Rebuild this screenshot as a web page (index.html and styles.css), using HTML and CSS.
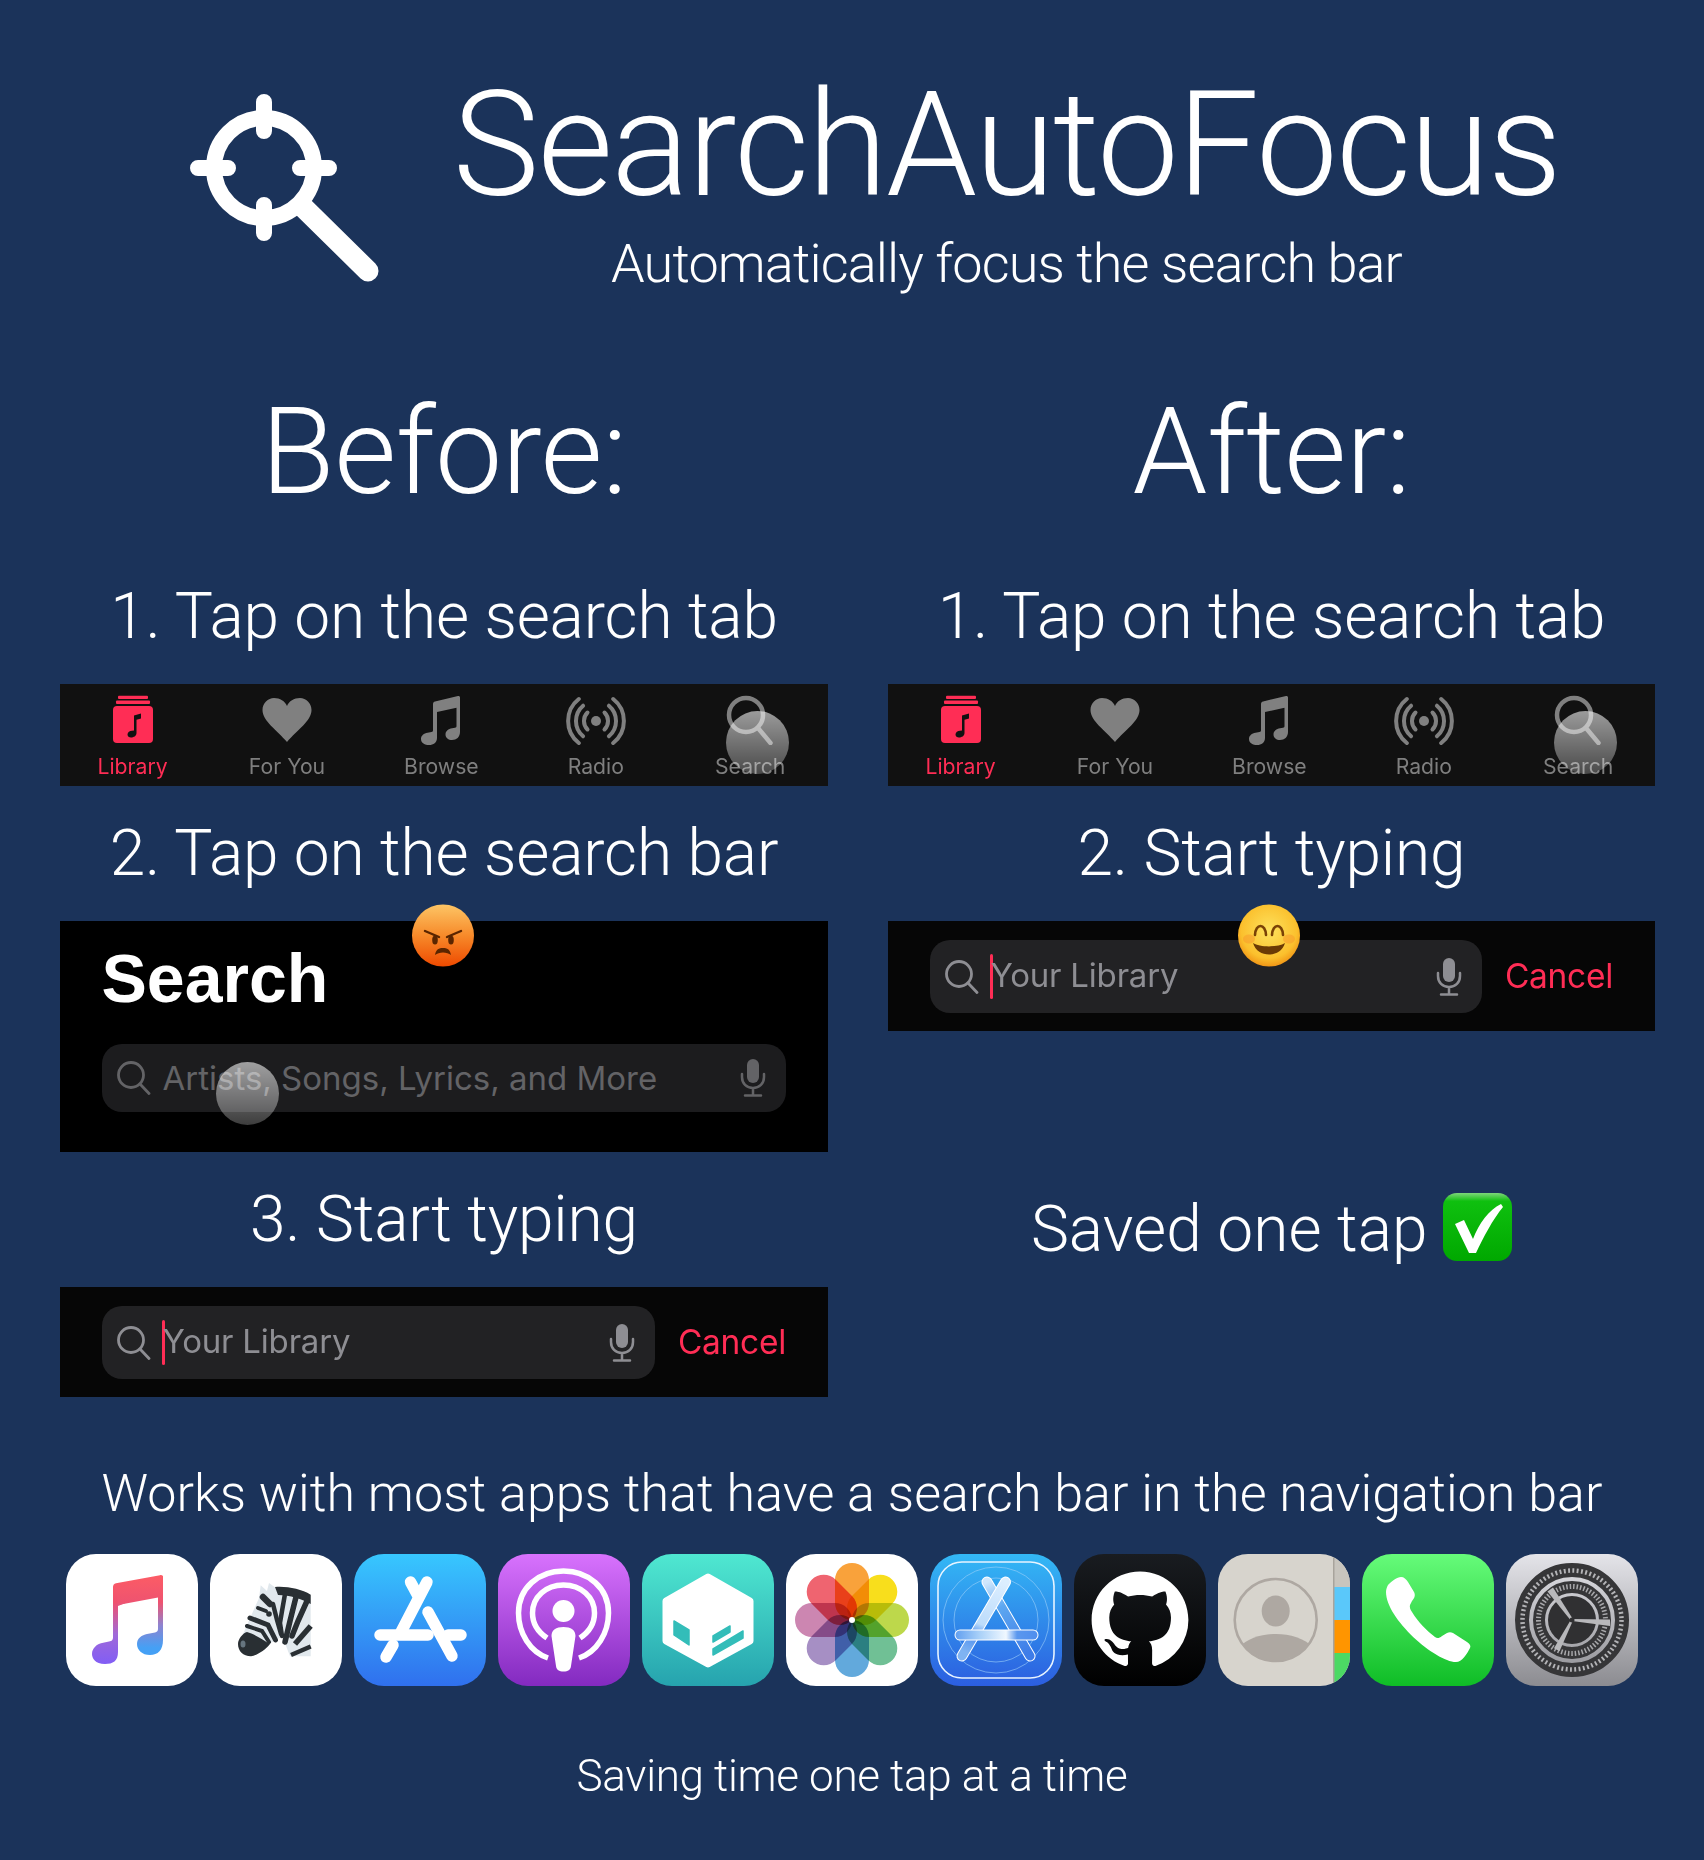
FILE: index.html
```html
<!DOCTYPE html>
<html lang="en">
<head>
<meta charset="utf-8">
<title>SearchAutoFocus</title>
<link rel="stylesheet" href="styles.css">
</head>
<body>
<svg class="defs" aria-hidden="true">
  <symbol id="i-library" viewBox="0 0 60 50">
    <rect x="15" y="0.7" width="30" height="3.3" rx="1" fill="#ff2d55"/>
    <rect x="13" y="5.5" width="34" height="3.5" rx="1" fill="#ff2d55"/>
    <rect x="10" y="11" width="40" height="37" rx="4" fill="#ff2d55"/>
    <path d="M31 20.500L38 18.500V23.500L33.500 24.800V38C33.500 41 30.500 42.500 28 42.500C26 42.500 24.500 41.300 24.500 39.500C24.500 37.300 26.800 36 29 35.800L31 35.500Z" fill="#111"/>
  </symbol>
  <symbol id="i-heart" viewBox="0 0 60 50">
    <path d="M30 47C20 35 5.500 26 5.500 15C5.500 8 11 3 17 3C23 3 28 6 30 11C32 6 37 3 43 3C49 3 54.500 8 54.500 15C54.500 26 40 35 30 47Z" fill="#808080"/>
  </symbol>
  <symbol id="i-note" viewBox="0 0 60 50">
    <path fill-rule="evenodd" d="M22 9C22 7.500 23 6.700 24 6.500L47 1C48.200 0.800 49 1.500 49 2.500V37C49 42 45.500 45 41 45C37.500 45 34.500 43 34.500 39.500C34.500 36 37.500 34 41 33.300L44 32.700C45 32.500 45.500 32 45.500 31V12.800L26 17V43C26 47.500 22.500 50 18 50C14 50 10 48 10 44C10 40.500 13 38.500 16.500 37.800L20.500 37C21.500 36.800 22 36.300 22 35.300Z" fill="#808080"/>
  </symbol>
  <symbol id="i-radio" viewBox="0 0 60 50">
    <circle cx="30" cy="26" r="5" fill="#808080"/>
    <g fill="none" stroke="#808080" stroke-width="4" stroke-linecap="round">
      <path d="M21.500 17.500A12 12 0 0 0 21.500 34.500M38.500 17.500A12 12 0 0 1 38.500 34.500"/>
      <path d="M17.100 10.700A20 20 0 0 0 17.100 41.300M42.900 10.700A20 20 0 0 1 42.900 41.300"/>
      <path d="M12.800 4A28 28 0 0 0 12.800 48M47.200 4A28 28 0 0 1 47.200 48"/>
    </g>
  </symbol>
  <symbol id="i-search-tab" viewBox="0 0 60 50">
    <g fill="none" stroke="#808080" stroke-width="4.500" stroke-linecap="round">
      <circle cx="26" cy="20" r="17"/>
      <path d="M38 33L50.500 48"/>
    </g>
  </symbol>
  <symbol id="i-glass" viewBox="0 0 34 34">
    <g fill="none" stroke="currentColor" stroke-width="2.800" stroke-linecap="round">
      <circle cx="14" cy="14" r="12.500"/>
      <path d="M23.500 23.500L32 32.500"/>
    </g>
  </symbol>
  <symbol id="i-mic" viewBox="0 0 26 38">
    <rect x="7" y="0" width="12" height="24" rx="6" fill="currentColor"/>
    <path d="M2 15V18C2 24.500 6.500 29 13 29C19.500 29 24 24.500 24 18V15M13 29V36M5 36.500H21" fill="none" stroke="currentColor" stroke-width="2.500" stroke-linecap="round"/>
  </symbol>
  <symbol id="i-touch" viewBox="0 0 63 63">
    <circle cx="31.500" cy="31.500" r="31.500" fill="url(#touchfill)"/>
  </symbol>
  <linearGradient id="touchfill" x1="0" y1="0" x2="0" y2="1">
    <stop offset="0" stop-color="#fff" stop-opacity="0.58"/>
    <stop offset="1" stop-color="#fff" stop-opacity="0.24"/>
  </linearGradient>
</svg>

<header class="hero">
  <svg class="logo" viewBox="0 0 192 192" width="192" height="192" aria-hidden="true">
    <g fill="none" stroke="#fff" stroke-linecap="round">
      <circle cx="74" cy="76" r="50" stroke-width="16"/>
      <path d="M74 10V39M74 113V141M8 76H38M110 76H139" stroke-width="16"/>
      <path d="M114 116L178 179" stroke-width="21"/>
    </g>
  </svg>
  <div class="hero-text">
    <h1 class="title">SearchAutoFocus</h1>
    <p class="subtitle">Automatically focus the search bar</p>
  </div>
</header>

<main class="compare">
  <section class="col">
    <h2 class="col-title">Before:</h2>
    <h3 class="step step-first">1. Tap on the search tab</h3>
    <div class="panel tabbar">
      <div class="tabs">
        <div class="tab tab-on"><svg class="tab-icon"><use href="#i-library"/></svg><span class="tab-label">Library</span></div>
        <div class="tab"><svg class="tab-icon"><use href="#i-heart"/></svg><span class="tab-label">For You</span></div>
        <div class="tab"><svg class="tab-icon"><use href="#i-note"/></svg><span class="tab-label">Browse</span></div>
        <div class="tab"><svg class="tab-icon"><use href="#i-radio"/></svg><span class="tab-label">Radio</span></div>
        <div class="tab"><svg class="tab-icon"><use href="#i-search-tab"/></svg><span class="tab-label">Search</span></div>
      </div>
      <svg class="touch touch-tab"><use href="#i-touch"/></svg>
    </div>
    <h3 class="step">2. Tap on the search bar</h3>
    <div class="panel searchpage">
      <div class="big-search">Search</div>
      <div class="field field-idle">
        <svg class="glass"><use href="#i-glass"/></svg>
        <span class="field-text">Artists, Songs, Lyrics, and More</span>
        <svg class="mic"><use href="#i-mic"/></svg>
      </div>
      <svg class="touch touch-field"><use href="#i-touch"/></svg>
      <svg class="emoji" viewBox="0 0 62 63" aria-hidden="true">
        <defs><linearGradient id="angry" x1="0" y1="0" x2="0" y2="1"><stop offset="0" stop-color="#fdc565"/><stop offset="0.5" stop-color="#f78a2a"/><stop offset="1" stop-color="#ee4a00"/></linearGradient></defs>
        <circle cx="31" cy="31.500" r="31" fill="url(#angry)"/>
        <g fill="none" stroke="#5a2500" stroke-width="2.400" stroke-linecap="round">
          <path d="M13 27L27 33M49 27L35 33"/>
        </g>
        <path d="M23 51C24 45 27 44 31 44C35 44 38 45 39 51C35 47.500 27 47.500 23 51Z" fill="#5a2500"/>
        <ellipse cx="23" cy="36" rx="2.800" ry="4.500" fill="#5a2500"/>
        <ellipse cx="39" cy="36" rx="2.800" ry="4.500" fill="#5a2500"/>
      </svg>
    </div>
    <h3 class="step">3. Start typing</h3>
    <div class="panel typing">
      <div class="field field-active">
        <svg class="glass"><use href="#i-glass"/></svg>
        <span class="caret"></span>
        <span class="field-text">Your Library</span>
        <svg class="mic"><use href="#i-mic"/></svg>
      </div>
      <span class="cancel">Cancel</span>
    </div>
  </section>

  <section class="col">
    <h2 class="col-title">After:</h2>
    <h3 class="step step-first">1. Tap on the search tab</h3>
    <div class="panel tabbar">
      <div class="tabs">
        <div class="tab tab-on"><svg class="tab-icon"><use href="#i-library"/></svg><span class="tab-label">Library</span></div>
        <div class="tab"><svg class="tab-icon"><use href="#i-heart"/></svg><span class="tab-label">For You</span></div>
        <div class="tab"><svg class="tab-icon"><use href="#i-note"/></svg><span class="tab-label">Browse</span></div>
        <div class="tab"><svg class="tab-icon"><use href="#i-radio"/></svg><span class="tab-label">Radio</span></div>
        <div class="tab"><svg class="tab-icon"><use href="#i-search-tab"/></svg><span class="tab-label">Search</span></div>
      </div>
      <svg class="touch touch-tab"><use href="#i-touch"/></svg>
    </div>
    <h3 class="step">2. Start typing</h3>
    <div class="panel typing">
      <div class="field field-active">
        <svg class="glass"><use href="#i-glass"/></svg>
        <span class="caret"></span>
        <span class="field-text">Your Library</span>
        <svg class="mic"><use href="#i-mic"/></svg>
      </div>
      <span class="cancel">Cancel</span>
      <svg class="emoji" viewBox="0 0 62 63" aria-hidden="true">
        <defs><radialGradient id="smile" cx="0.5" cy="0.42" r="0.62"><stop offset="0" stop-color="#fde25e"/><stop offset="0.72" stop-color="#fbc02d"/><stop offset="1" stop-color="#ee8a10"/></radialGradient></defs>
        <circle cx="31" cy="31.500" r="31" fill="url(#smile)"/>
        <ellipse cx="11" cy="35" rx="6" ry="4.500" fill="#f79a2c" opacity="0.55"/>
        <ellipse cx="51" cy="35" rx="6" ry="4.500" fill="#f79a2c" opacity="0.55"/>
        <g fill="none" stroke="#7a4206" stroke-width="2.600" stroke-linecap="round">
          <path d="M17 31C17.500 19 27.500 19 28 31M34 31C34.500 19 44.500 19 45 31"/>
        </g>
        <path d="M15 39C22 43.500 40 43.500 47 39C44.500 47 38 50.500 31 50.500C24 50.500 17.500 47 15 39Z" fill="#6b3a05"/>
      </svg>
    </div>
    <p class="saved">Saved one tap <svg class="check" viewBox="0 0 69 68" aria-hidden="true">
      <defs><linearGradient id="checkbg" x1="0" y1="0" x2="0" y2="1"><stop offset="0" stop-color="#7ed67a"/><stop offset="0.12" stop-color="#0fc00f"/><stop offset="1" stop-color="#00a800"/></linearGradient></defs>
      <rect width="69" height="68" rx="14" fill="url(#checkbg)"/>
      <path d="M12 31L21 27L30 46C36 30 46 17 58 11L60 14C50 26 40 45 33 60H26Z" fill="#fff"/>
    </svg></p>
  </section>
</main>

<footer class="apps">
  <p class="works">Works with most apps that have a search bar in the navigation bar</p>
  <div class="app-row">
    <svg class="app" viewBox="0 0 132 132" aria-hidden="true">
      <defs><linearGradient id="m1" gradientUnits="userSpaceOnUse" x1="0" y1="21" x2="0" y2="112"><stop offset="0" stop-color="#fc5c65"/><stop offset="0.3" stop-color="#f0506e"/><stop offset="0.65" stop-color="#a06ad8"/><stop offset="1" stop-color="#7f5cf7"/></linearGradient>
      <linearGradient id="m2" gradientUnits="userSpaceOnUse" x1="0" y1="21" x2="0" y2="112"><stop offset="0" stop-color="#fc5c65"/><stop offset="0.3" stop-color="#ee5370"/><stop offset="0.55" stop-color="#8f83cf"/><stop offset="0.8" stop-color="#45a0f5"/></linearGradient></defs>
      <rect width="132" height="132" fill="#fff"/>
      <path d="M47 33C47 31 48 30 50 29.300L94 21.200C96 20.800 97 21.600 97 23.500V34L52 52V98C52 107 47 110 39 110C29 110 26 104 26 100C26 94 31 90 36 89L43 87.500C46 87 47 86 47 83Z" fill="url(#m1)"/>
      <path d="M97 22V86C97 96 92 101 84 101C76 101 71 96 71 90C71 84 76 81 81 80L89 78.500C91 78 92 77 92 75V43.500L52 51L50 35Z" fill="url(#m2)"/>
    </svg>
    <svg class="app" viewBox="0 0 132 132" aria-hidden="true">
      <rect width="132" height="132" fill="#fff"/>
      <path d="M50.700 31.300L57 37L59 29L66 34C78 33 92 35 100.700 41V102.300H80L72.300 82.300L60.700 89L41 102.300L28.300 90.700L35.700 74L49 44Z" fill="#e1e8ed"/>
      <path d="M65 33C77 32 91 35 100.700 40.700V50C92 45 80 41 68 41Z" fill="#292f33"/>
      <g fill="none" stroke="#292f33" stroke-linecap="round">
        <path d="M75 40L72 57L70 69L72 82" stroke-width="4.500"/>
        <path d="M86 43L80 67L75 88" stroke-width="5.500"/>
        <path d="M97 47L88 67L82 82" stroke-width="5.500"/>
        <path d="M100.700 72L85 90" stroke-width="5.500" stroke-linecap="butt"/>
        <path d="M100.700 92.500L81 101" stroke-width="4.500" stroke-linecap="butt"/>
        <path d="M53 43L60 50" stroke-width="6.500"/>
        <path d="M48 54L56 57" stroke-width="4"/>
        <path d="M63 50L67 66L71 80" stroke-width="4.500"/>
        <path d="M40 64L58 71L65.500 86" stroke-width="5"/>
        <path d="M37 72L52 77L59 88" stroke-width="4"/>
      </g>
      <circle cx="59" cy="60" r="2.800" fill="#292f33"/>
      <path d="M37 78C45 80 55 87 60 90C55 96 48 101 41 102.300C33 102.300 28 97 28 90C28 85 33 79 37 78Z" fill="#292f33"/>
      <ellipse cx="33" cy="90" rx="2.500" ry="3.500" fill="#66757f"/>
    </svg>
    <svg class="app" viewBox="0 0 132 132" aria-hidden="true">
      <defs><linearGradient id="as" x1="0" y1="0" x2="0" y2="1"><stop offset="0" stop-color="#37c7fe"/><stop offset="1" stop-color="#3070ee"/></linearGradient></defs>
      <rect width="132" height="132" fill="url(#as)"/>
      <g fill="none" stroke="#fff" stroke-width="11.500" stroke-linecap="round">
        <path d="M73 28L46 80"/>
        <path d="M56.500 28L63 40"/>
        <path d="M74 58L98 102"/>
        <path d="M26 81H74M94 81H107"/>
        <path d="M39 91L32 103"/>
      </g>
    </svg>
    <svg class="app" viewBox="0 0 132 132" aria-hidden="true">
      <defs><linearGradient id="pc" x1="0" y1="0" x2="0" y2="1"><stop offset="0" stop-color="#d872fd"/><stop offset="1" stop-color="#832ac0"/></linearGradient></defs>
      <rect width="132" height="132" fill="url(#pc)"/>
      <g fill="none" stroke="#fff" stroke-width="5.500">
        <path d="M50 104C32 98 20.500 79 20.500 59C20.500 34 40.500 17 65.500 17C90.500 17 110.500 34 110.500 59C110.500 79 99 98 81 104"/>
        <path d="M49 84C40 78 34.500 69 34.500 59C34.500 43 48 31 65.500 31C83 31 96.500 43 96.500 59C96.500 69 91 78 82 84"/>
      </g>
      <circle cx="65.500" cy="57" r="11" fill="#fff"/>
      <path d="M53.500 82C53.500 76 58 73 65.500 73C73 73 77.500 76 77.500 82L73 112C72.500 116 70 117.500 65.500 117.500C61 117.500 58.500 116 58 112Z" fill="#fff"/>
    </svg>
    <svg class="app" viewBox="0 0 132 132" aria-hidden="true">
      <defs><linearGradient id="sl" x1="0" y1="0" x2="0" y2="1"><stop offset="0" stop-color="#4fe8d1"/><stop offset="1" stop-color="#26a3ae"/></linearGradient></defs>
      <rect width="132" height="132" fill="url(#sl)"/>
      <path d="M66 23L108 47V87L66 110L24 87V47Z" fill="#fff" stroke="#fff" stroke-width="7" stroke-linejoin="round"/>
      <g fill="#33bdb9" stroke="#33bdb9" stroke-width="1.500" stroke-linejoin="round">
        <path d="M32 67L47 76V91L32 81Z"/>
        <path d="M71 82L88 72V78L71 88Z"/>
        <path d="M71 95L101 77V84L71 101Z"/>
      </g>
    </svg>
    <svg class="app" viewBox="0 0 132 132" aria-hidden="true">
      <rect width="132" height="132" fill="#fff"/>
      <g class="petals">
        <rect class="petal" x="49" y="9" width="34" height="57" rx="17" fill="#f9a23b"/>
        <rect class="petal" x="49" y="9" width="34" height="57" rx="17" fill="#f8de1c" transform="rotate(45 66 66)"/>
        <rect class="petal" x="49" y="9" width="34" height="57" rx="17" fill="#bdd84b" transform="rotate(90 66 66)"/>
        <rect class="petal" x="49" y="9" width="34" height="57" rx="17" fill="#70c095" transform="rotate(135 66 66)"/>
        <rect class="petal" x="49" y="9" width="34" height="57" rx="17" fill="#62a9dc" transform="rotate(180 66 66)"/>
        <rect class="petal" x="49" y="9" width="34" height="57" rx="17" fill="#a68fc4" transform="rotate(225 66 66)"/>
        <rect class="petal" x="49" y="9" width="34" height="57" rx="17" fill="#cc86b1" transform="rotate(270 66 66)"/>
        <rect class="petal" x="49" y="9" width="34" height="57" rx="17" fill="#ef6470" transform="rotate(315 66 66)"/>
      </g>
      <circle cx="66" cy="66" r="3" fill="#fff"/>
    </svg>
    <svg class="app" viewBox="0 0 132 132" aria-hidden="true">
      <defs><linearGradient id="xc" x1="0" y1="0" x2="0" y2="1"><stop offset="0" stop-color="#33b8f5"/><stop offset="1" stop-color="#2c5ee0"/></linearGradient>
      <linearGradient id="xl" gradientUnits="userSpaceOnUse" x1="70" y1="27" x2="40" y2="100"><stop offset="0" stop-color="#dceeff"/><stop offset="0.6" stop-color="#bcdcfb"/><stop offset="0.75" stop-color="#4f8fee"/><stop offset="1" stop-color="#7fb3f2"/></linearGradient>
      <linearGradient id="xr" gradientUnits="userSpaceOnUse" x1="60" y1="27" x2="95" y2="100"><stop offset="0" stop-color="#cfe7fd"/><stop offset="0.35" stop-color="#5da7f0"/><stop offset="1" stop-color="#3f7de8"/></linearGradient>
      <linearGradient id="xh" gradientUnits="userSpaceOnUse" x1="24" y1="0" x2="108" y2="0"><stop offset="0" stop-color="#5d9cef"/><stop offset="0.3" stop-color="#a8d0f8"/><stop offset="0.62" stop-color="#f0f8ff"/><stop offset="0.75" stop-color="#5a97ee"/><stop offset="1" stop-color="#4f8eee"/></linearGradient></defs>
      <rect width="132" height="132" fill="url(#xc)"/>
      <rect x="8" y="8" width="116" height="116" rx="24" fill="none" stroke="#e8f4ff" stroke-width="1.600"/>
      <circle cx="66" cy="66" r="53" fill="none" stroke="#9fd2fa" stroke-width="0.600"/>
      <circle cx="66" cy="66" r="42" fill="none" stroke="#9fd2fa" stroke-width="0.600"/>
      <g stroke-linecap="round" fill="none">
        <path d="M57 28L100 102" stroke="#fff" stroke-width="11"/>
        <path d="M57 28L100 102" stroke="url(#xr)" stroke-width="9"/>
        <path d="M75.500 28L32 102" stroke="#fff" stroke-width="11"/>
        <path d="M75.500 28L32 102" stroke="url(#xl)" stroke-width="9"/>
        <path d="M30 81H103" stroke="#fff" stroke-width="11"/>
        <path d="M30 81H103" stroke="url(#xh)" stroke-width="9"/>
      </g>
    </svg>
    <svg class="app" viewBox="0 0 132 132" aria-hidden="true">
      <defs><linearGradient id="gh" x1="0" y1="0" x2="0" y2="1"><stop offset="0" stop-color="#191c20"/><stop offset="1" stop-color="#000"/></linearGradient></defs>
      <rect width="132" height="132" fill="url(#gh)"/>
      <path transform="translate(17.600 17.600) scale(6.050)" fill="#fff" d="M8 0C3.580 0 0 3.580 0 8c0 3.540 2.290 6.530 5.470 7.590.4.070.55-.17.55-.38 0-.19-.01-.82-.01-1.490-2.010.37-2.530-.49-2.690-.94-.09-.23-.48-.94-.82-1.130-.28-.15-.68-.52-.01-.53.63-.01 1.080.58 1.230.82.72 1.210 1.870.87 2.330.66.07-.52.28-.87.51-1.070-1.780-.2-3.640-.89-3.640-3.950 0-.87.31-1.590.82-2.150-.08-.2-.36-1.020.08-2.120 0 0 .67-.21 2.200.82.64-.18 1.320-.27 2-.27.68 0 1.360.09 2 .27 1.530-1.040 2.200-.82 2.200-.82.44 1.100.16 1.920.08 2.120.51.56.82 1.270.82 2.150 0 3.070-1.870 3.750-3.650 3.950.29.25.54.73.54 1.480 0 1.070-.01 1.930-.01 2.200 0 .21.15.46.55.38A8.013 8.013 0 0016 8c0-4.420-3.580-8-8-8z"/>
    </svg>
    <svg class="app" viewBox="0 0 132 132" aria-hidden="true">
      <defs><clipPath id="ct"><circle cx="57.700" cy="66" r="40.400"/></clipPath></defs>
      <rect width="132" height="132" fill="#d7d4cd"/>
      <rect x="115" y="0" width="17" height="33" fill="#c8c5be"/>
      <rect x="115" y="33" width="17" height="33" fill="#5ac8fa"/>
      <rect x="115" y="66" width="17" height="33" fill="#ff9500"/>
      <rect x="115" y="99" width="17" height="33" fill="#4cd964"/>
      <rect x="115" y="0" width="1.500" height="132" fill="#a8a49c"/>
      <circle cx="57.700" cy="66" r="41" fill="none" stroke="#aea8a2" stroke-width="2.600"/>
      <ellipse cx="57.700" cy="57" rx="14" ry="15.500" fill="#aea8a2"/>
      <path d="M20 94C30 84 44 80 58 80C72 80 86 84 96 94V112H20Z" fill="#aea8a2" clip-path="url(#ct)"/>
    </svg>
    <svg class="app" viewBox="0 0 132 132" aria-hidden="true">
      <defs><linearGradient id="ph" x1="0" y1="0" x2="0" y2="1"><stop offset="0" stop-color="#66fb7a"/><stop offset="1" stop-color="#0fbd26"/></linearGradient></defs>
      <rect width="132" height="132" fill="url(#ph)"/>
      <path d="M26 31C30 27 35 23 39 23C42 23 44 25 46 28L52 38C53.500 41 53 43.500 50 47L48 51C47.500 53 48 55 50 58C56 68 65 77 73 83C75 84.500 77 84.500 80 82L85 79C87 78 89 78 91 79L105 88C108 90 109 92 108 94C105 100 100 108 94 108C74 108 24 65 24 38C24 35 25 33 26 31Z" fill="#fff"/>
    </svg>
    <svg class="app" viewBox="0 0 132 132" aria-hidden="true">
      <defs><linearGradient id="st" x1="0" y1="0" x2="0" y2="1"><stop offset="0" stop-color="#e4e4e9"/><stop offset="1" stop-color="#8c8c91"/></linearGradient></defs>
      <rect width="132" height="132" fill="url(#st)"/>
      <g fill="none">
        <circle cx="66" cy="66" r="50" stroke="#363638" stroke-width="14"/>
        <circle cx="66" cy="66" r="49.500" stroke="#b4b4b7" stroke-width="4.500" stroke-dasharray="1.900 2.420"/>
        <circle cx="66" cy="66" r="33" stroke="#363638" stroke-width="12"/>
        <circle cx="66" cy="66" r="33.500" stroke="#a8a8ab" stroke-width="5" stroke-dasharray="1.500 1.950"/>
      </g>
      <circle cx="66" cy="66" r="24" fill="#303032"/>
      <g fill="#b8b8bb">
        <path d="M66 65L104 65.500V72L66 67Z"/>
        <path d="M67 65.200L47 33.500L41.500 37.500L65 66.800Z"/>
        <path d="M67 66.500L53.500 97.200L48 94.200L65 65.500Z"/>
      </g>
      <circle cx="66" cy="66" r="2.500" fill="#303032"/>
    </svg>
  </div>
  <p class="tagline">Saving time one tap at a time</p>
</footer>
</body>
</html>
```
FILE: styles.css
```css
* { box-sizing: border-box; }
html, body { margin: 0; padding: 0; }
body {
  width: 1704px;
  height: 1860px;
  overflow: hidden;
  background: #1b335a;
  color: #fff;
  font-family: Roboto, "Liberation Sans", sans-serif;
  font-weight: 300;
}
h1, h2, h3, p { margin: 0; font-weight: 300; }
.defs { position: absolute; width: 0; height: 0; }

.hero {
  display: flex;
  height: 380px;
  padding: 92px 0 0 190px;
}
.logo { flex: none; }
.hero-text {
  width: 1101px;
  margin-left: 74px;
  margin-top: -26px;
  display: flex;
  flex-direction: column;
  align-items: center;
}
.title { font-size: 146px; line-height: 160px; white-space: nowrap; letter-spacing: -1.74px; }
.subtitle { font-size: 54px; line-height: 70px; margin-top: 3px; white-space: nowrap; letter-spacing: -0.87px; }

.compare {
  display: grid;
  grid-template-columns: 768px 767px;
  column-gap: 60px;
  padding-left: 60px;
  height: 1017px;
}
.col { display: flex; flex-direction: column; align-items: center; }
.col-title { font-size: 120px; line-height: 142px; letter-spacing: -0.5px; position: relative; top: 1px; }
.step { font-size: 64px; line-height: 80px; margin: 28px 0 27px; letter-spacing: -0.15px; }
.step-first { margin-top: 55px; }

.panel { position: relative; width: 100%; }
.tabbar { height: 102px; background: #111; }
.searchpage { height: 231px; background: #000; padding: 23px 42px 0 41.500px; }
.typing {
  height: 110px;
  background: #060606;
  padding: 19px 42px 0 41.500px;
  display: flex;
  gap: 23px;
}

.tabs {
  display: grid;
  grid-template-columns: repeat(5, 154.400px);
  margin-left: -4.600px;
}
.tab { display: flex; flex-direction: column; align-items: center; padding-top: 11px; }
.tab-icon { width: 60px; height: 50px; display: block; }
.tab-label {
  font-family: Inter, Roboto, sans-serif;
  font-weight: 400;
  font-size: 21.200px;
  line-height: 24px;
  margin-top: 9px;
  color: #7f7f7f;
}
.tab-on .tab-label { color: #ff2d55; }

.touch { position: absolute; width: 63px; height: 63px; }
.touch-tab { left: 665.500px; top: 27px; }
.touch-field { left: 156px; top: 141px; }
.emoji { position: absolute; width: 62px; height: 63px; left: 352px; top: -17px; }
.typing .emoji { left: 350px; }

.big-search {
  font-family: "Liberation Sans", Arial, sans-serif;
  font-weight: 700;
  font-size: 68px;
  line-height: 66px;
  margin: 1px 0 33px 0;
}
.field {
  display: flex;
  align-items: center;
  border-radius: 20px;
  padding: 0 20px 0 15px;
  font-family: Inter, Roboto, sans-serif;
  font-weight: 400;
  font-size: 33px;
}
.field-idle { height: 68px; background: #1c1c1e; color: #636366; }
.field-active { height: 73px; flex: 1; background: #222224; color: #8e8e93; }
.glass { width: 34px; height: 34px; flex: none; }
.field-text { flex: 1; margin-left: 12px; white-space: nowrap; letter-spacing: 0; }
.caret {
  width: 3px;
  height: 45px;
  margin-left: 11px;
  border-radius: 2px;
  background: #ff2d55;
  flex: none;
}
.field-active .field-text { margin-left: -2px; padding-bottom: 3px; letter-spacing: -0.2px; }
.mic { width: 26px; height: 38px; flex: none; }
.cancel {
  font-family: Inter, Roboto, sans-serif;
  font-weight: 400;
  font-size: 33.500px;
  line-height: 73px;
  color: #ff2d55;
  letter-spacing: -0.3px;
}

.saved {
  font-size: 64px;
  line-height: 80px;
  margin-top: 159px;
  white-space: nowrap;
}
.check { width: 69px; height: 68px; vertical-align: -10px; }

.apps { display: flex; flex-direction: column; align-items: center; }
.works { font-size: 52px; line-height: 60px; margin-top: 67px; white-space: nowrap; letter-spacing: 0.04px; }
.app-row { display: flex; gap: 12px; margin: 30px 0 0 0; }
.app { width: 132px; height: 132px; border-radius: 30px; display: block; flex: none; }
.petals { isolation: isolate; }
.petal { mix-blend-mode: multiply; }
.tagline { font-size: 44px; line-height: 60px; margin-top: 60px; letter-spacing: -0.32px; }
```
